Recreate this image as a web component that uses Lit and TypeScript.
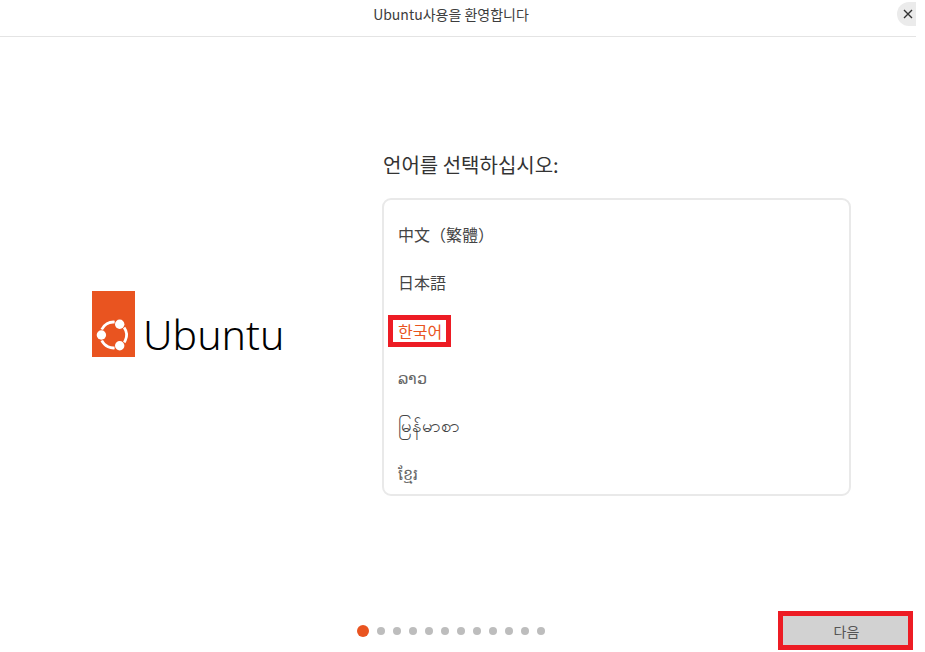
import { LitElement, html, css } from "lit";
import { customElement } from "lit/decorators.js";

const LANGS = [
  { t: "中文（繁體）", c: "" },
  { t: "日本語", c: "" },
  { t: "한국어", c: "picked" },
  { t: "ລາວ", c: "lao" },
  { t: "မြန်မာစာ", c: "mya" },
  { t: "ខ្មែរ", c: "khm" },
];

@customElement("app-root")
export class AppRoot extends LitElement {
  static styles = css`
    :host {
      display: block;
      width: 925px;
      height: 652px;
      background: #fff;
      color: #3d3d3d;
      font-family: "Noto Sans CJK KR", "Noto Sans", "DejaVu Sans", sans-serif;
      overflow: hidden;
    }
    .window {
      width: 916px;
      height: 652px;
      display: flex;
      flex-direction: column;
    }
    .header {
      height: 36px;
      flex: none;
      display: flex;
      align-items: flex-start;
      border-bottom: 1px solid #e4e4e4;
    }
    .title {
      flex: 1;
      padding-left: 5px;
      text-align: center;
      font-size: 14px;
      line-height: 29px;
      color: #3d3d3d;
    }
    .close {
      width: 19px;
      height: 24px;
      margin-top: 2px;
      background: #ebebeb;
      border-radius: 12px 0 0 12px;
      display: flex;
      align-items: center;
      justify-content: flex-end;
      padding-right: 2px;
      box-sizing: border-box;
    }
    .close svg { display: block; }
    .main {
      flex: 1;
      display: flex;
      padding-left: 92px;
    }
    .brand {
      width: 290px;
      flex: none;
      display: flex;
      align-items: flex-start;
      padding-top: 254px;
      box-sizing: border-box;
      height: 100%;
    }
    .brand svg { display: block; flex: none; }
    .word {
      margin-left: 8px;
      margin-top: 18px;
      font-family: "Noto Sans", sans-serif;
      font-weight: 300;
      font-size: 41px;
      line-height: 50px;
      color: #000;
    }
    .content {
      width: 469px;
      padding-top: 113px;
    }
    h1 {
      margin: 0 0 19px;
      padding-left: 1px;
      font-weight: 400;
      font-size: 20px;
      line-height: 29px;
      color: #333;
    }
    .list {
      height: 298px;
      box-sizing: border-box;
      border: 2px solid #e9e9e9;
      border-radius: 9px;
      padding-top: 10px;
      overflow: hidden;
    }
    .row {
      height: 48px;
      display: flex;
      align-items: center;
      padding-left: 14px;
      font-size: 16px;
      color: #444;
    }
    .row.picked {
      padding-left: 4px;
    }
    .picked span {
      border: 5px solid #ed1c24;
      margin-top: 2px;
      padding: 0 4px 0 5px;
      line-height: 22px;
      color: #e95420;
    }
    .lao {
      font-family: "DejaVu Sans Light", "DejaVu Sans", sans-serif;
      font-weight: 200;
      color: #666;
    }
    .mya { font-size: 18.5px; }
    .khm { font-weight: 300; color: #666; }
    .footer {
      height: 38px;
      flex: none;
      display: flex;
    }
    .dots {
      flex: none;
      margin-left: 357px;
      margin-top: 11px;
      display: flex;
      align-items: center;
      gap: 8px;
      height: 12px;
    }
    .dot {
      width: 8px;
      height: 8px;
      border-radius: 50%;
      background: #bdbdbd;
    }
    .dot.on {
      width: 12px;
      height: 12px;
      background: #e95420;
    }
    .next {
      margin-left: auto;
      margin-right: 3px;
      margin-top: -3px;
      width: 135px;
      height: 39px;
      box-sizing: border-box;
      border: 5px solid #ed1c24;
      background: #d2d2d2;
      color: #555;
      font: inherit;
      font-size: 14px;
      padding: 0 0 0 2px;
    }
  `;

  render() {
    return html`
      <div class="window">
        <div class="header">
          <div class="title">Ubuntu사용을 환영합니다</div>
          <div class="close">
            <svg width="12" height="12" viewBox="0 0 12 12">
              <path d="M2 2l8 8M10 2l-8 8" stroke="#333" stroke-width="1.4" fill="none" />
            </svg>
          </div>
        </div>
        <div class="main">
          <div class="brand">
            <svg width="43" height="66" viewBox="0 0 43 66">
              <rect width="43" height="66" fill="#e95420" />
              <circle
                cx="21.5"
                cy="44"
                r="13"
                fill="none"
                stroke="#fff"
                stroke-width="2.8"
                pathLength="360"
                stroke-dasharray="70 50"
                transform="rotate(205 21.5 44)"
              />
              <g fill="#fff">
                <circle cx="9.4" cy="44" r="4.7" />
                <circle cx="27.7" cy="33.3" r="4.7" />
                <circle cx="27.7" cy="54.7" r="4.7" />
              </g>
            </svg>
            <div class="word">Ubuntu</div>
          </div>
          <div class="content">
            <h1>언어를 선택하십시오:</h1>
            <div class="list">
              ${LANGS.map(
                (l) => html`<div class="row ${l.c}">
                  ${l.c === "picked" ? html`<span>${l.t}</span>` : l.t}
                </div>`
              )}
            </div>
          </div>
        </div>
        <div class="footer">
          <div class="dots">
            <div class="dot on"></div>
            ${Array.from({ length: 11 }, () => html`<div class="dot"></div>`)}
          </div>
          <button class="next">다음</button>
        </div>
      </div>
    `;
  }
}
